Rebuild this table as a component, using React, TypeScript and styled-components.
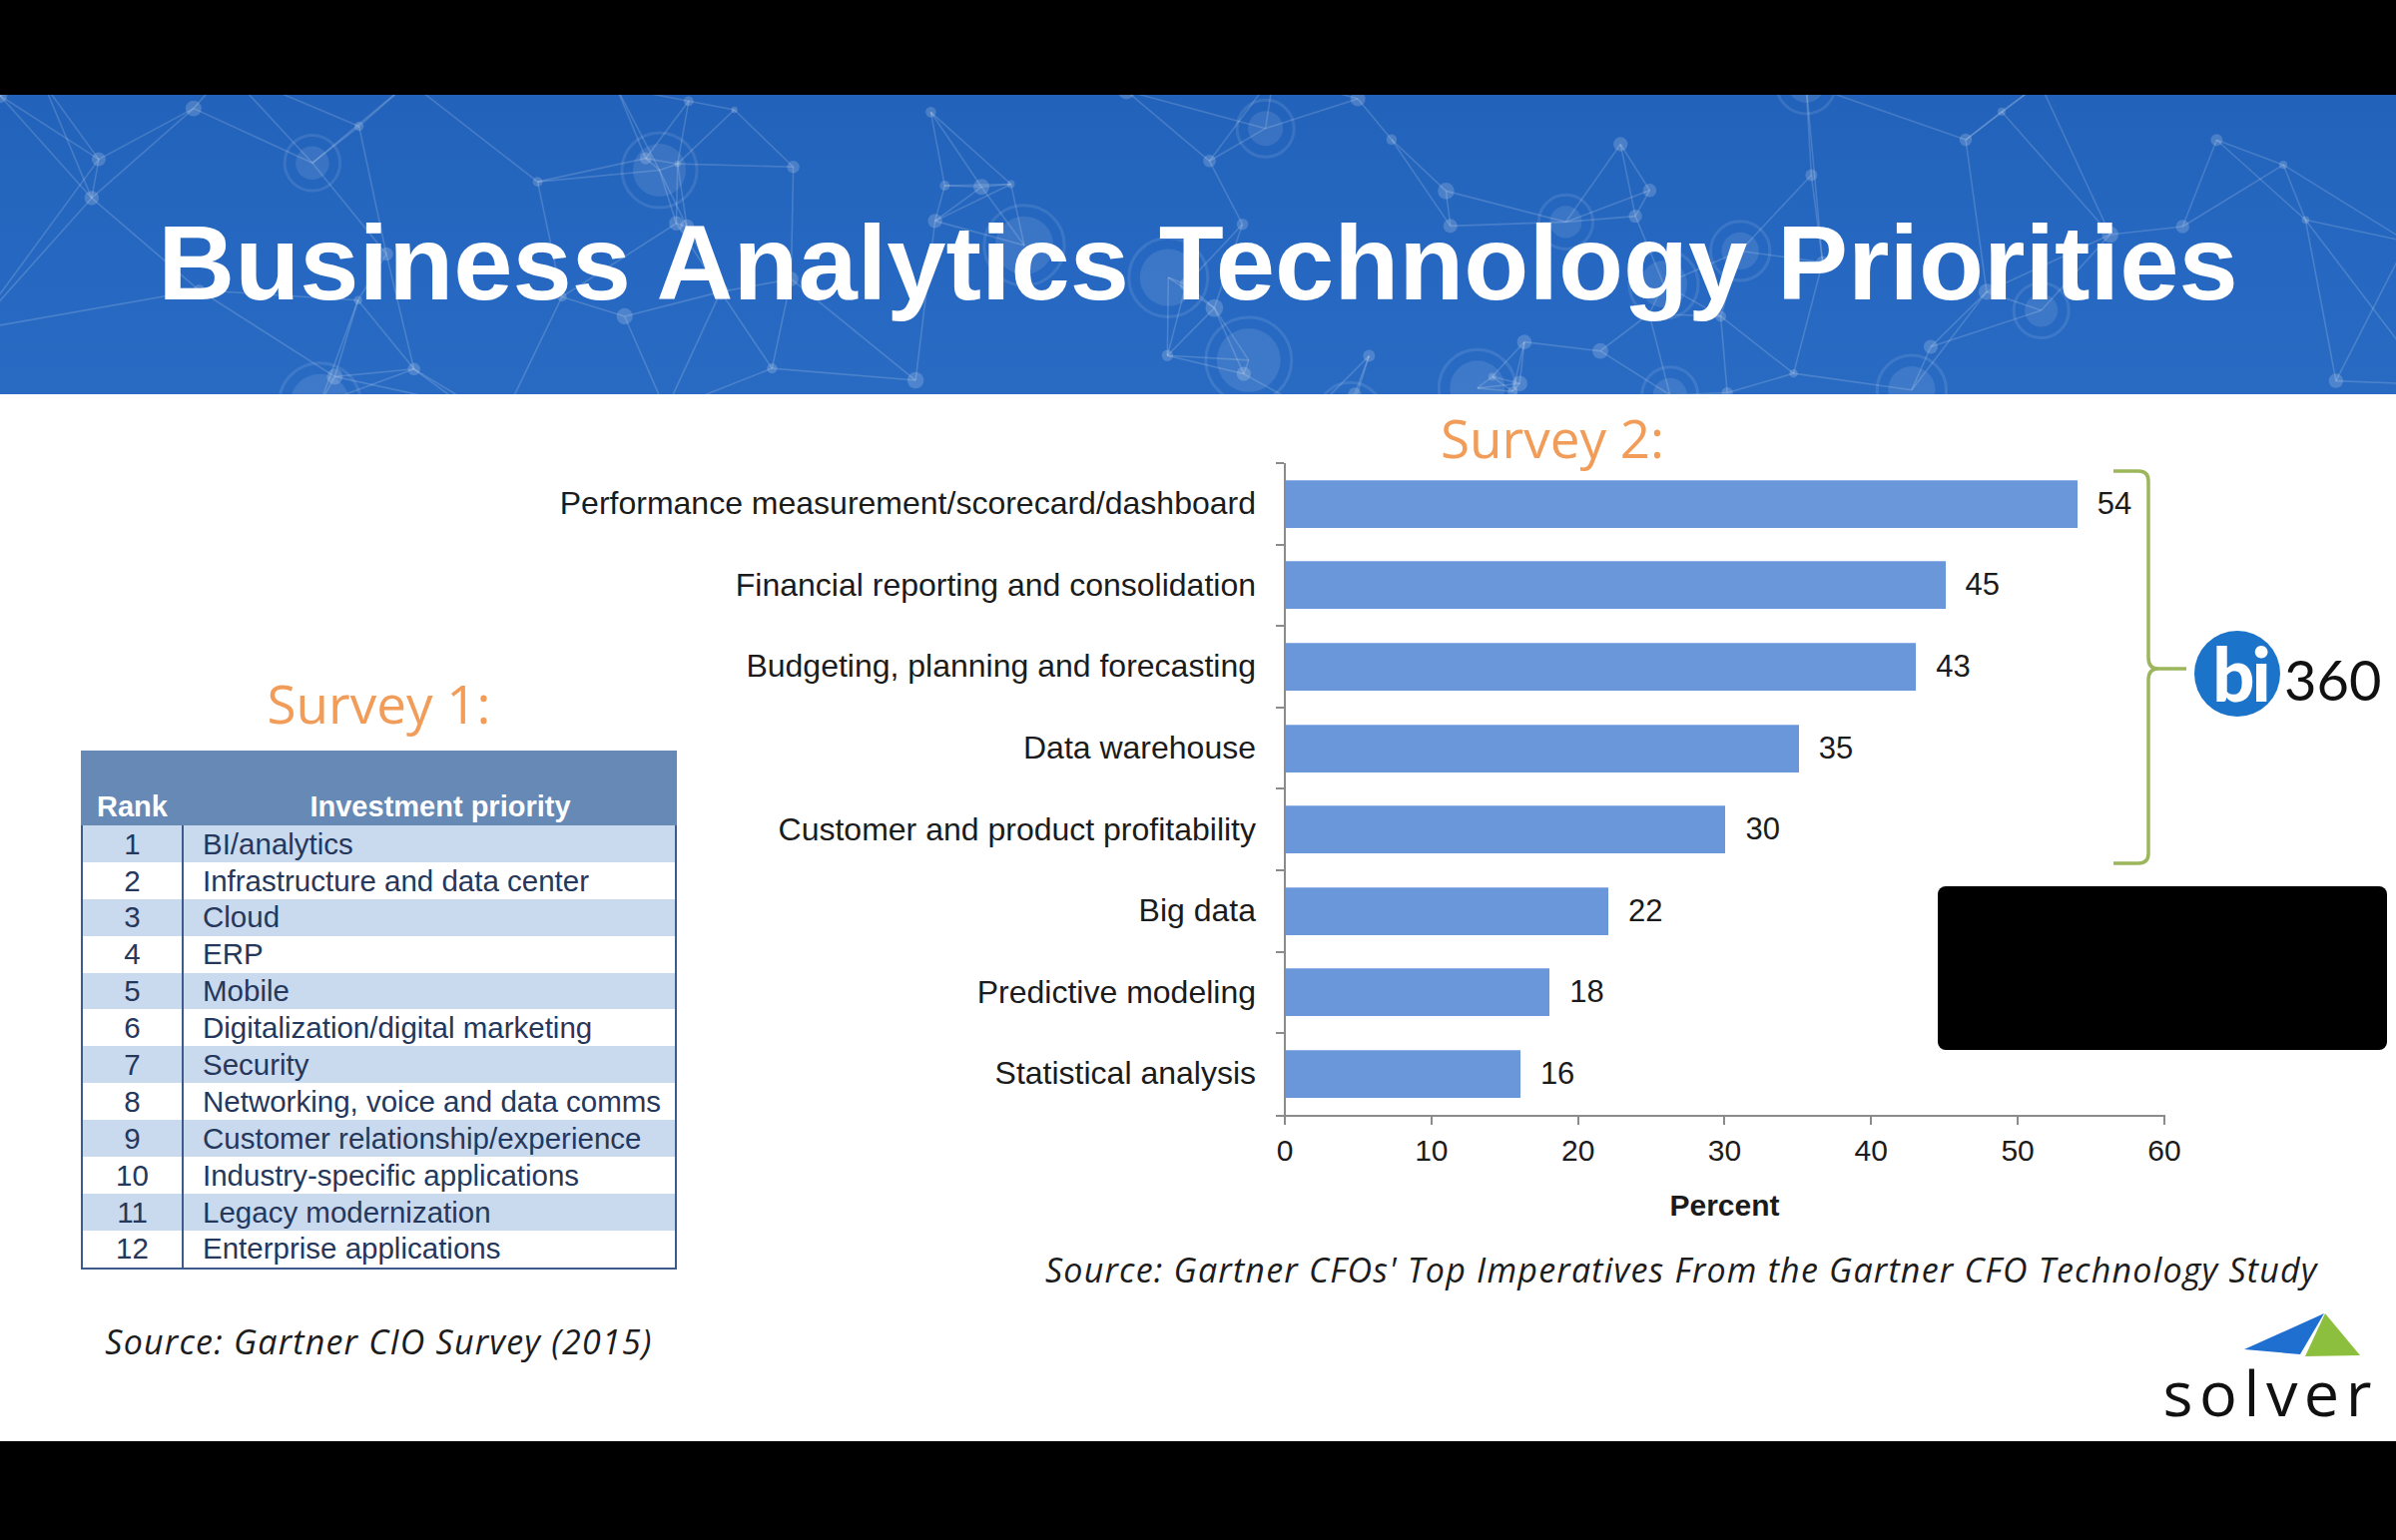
import React, { useMemo } from 'react';
import styled, { createGlobalStyle } from 'styled-components';

const GlobalStyle = createGlobalStyle`
  html, body {
    margin: 0;
    padding: 0;
    background: #000;
  }
  body {
    width: 2400px;
    height: 1543px;
    overflow: hidden;
    font-family: 'Liberation Sans', Arial, sans-serif;
  }
  * {
    box-sizing: border-box;
  }
`;

const Slide = styled.div`
  width: 2400px;
  height: 1543px;
  display: flex;
  flex-direction: column;
  background: #000;
`;

const Letterbox = styled.div<{ $h: number }>`
  height: ${(p) => p.$h}px;
  flex-shrink: 0;
  background: #000;
`;

const Banner = styled.header`
  position: relative;
  height: 300px;
  flex-shrink: 0;
  overflow: hidden;
  display: flex;
  align-items: center;
  justify-content: center;
  padding-top: 37px;
  background: linear-gradient(180deg, #2262ba 0%, #2668c1 55%, #296bc3 100%);
`;

const NetworkLayer = styled.svg`
  position: absolute;
  inset: 0;
  width: 100%;
  height: 100%;
`;

const Title = styled.h1`
  position: relative;
  margin: 0;
  font-family: 'Liberation Sans', Arial, sans-serif;
  font-weight: 700;
  font-size: 106.5px;
  line-height: 105px;
  color: #fff;
  white-space: nowrap;
`;

const Content = styled.main`
  height: 1049px;
  flex-shrink: 0;
  background: #fff;
  display: flex;
`;

const LeftColumn = styled.section`
  width: 597px;
  margin-left: 81px;
  padding-top: 283px;
  display: flex;
  flex-direction: column;
  align-items: center;
  flex-shrink: 0;
`;

const RightColumn = styled.section`
  position: relative;
  flex: 1;
  padding-top: 17px;
  display: flex;
  flex-direction: column;
  align-items: flex-start;
`;

const SurveyTitle = styled.h2<{ $offset?: number }>`
  margin: 0 0 0 ${(p) => p.$offset ?? 0}px;
  font-family: 'Open Sans', 'Noto Sans', sans-serif;
  font-weight: 400;
  font-size: 53px;
  line-height: 53px;
  color: #f19c58;
  white-space: nowrap;
`;

const SourceNote = styled.p<{ $offset?: number; $top: number }>`
  margin: ${(p) => p.$top}px 0 0 ${(p) => p.$offset ?? 0}px;
  font-family: 'Open Sans', 'Noto Sans', sans-serif;
  font-style: italic;
  font-size: 34px;
  line-height: 40px;
  letter-spacing: 1.2px;
  color: #1c1c1c;
  white-space: nowrap;
`;

/* ---------- survey 1 table ---------- */

const TableBox = styled.div`
  width: 597px;
  margin-top: 21px;
  display: flex;
  flex-direction: column;
`;

const TableHead = styled.div`
  height: 75px;
  display: grid;
  grid-template-columns: 103px 1fr;
  align-items: end;
  padding-bottom: 2px;
  background: #6689b5;
  color: #fff;
  font-weight: 700;
  font-size: 29px;
  line-height: 34px;
`;

const HeadCell = styled.div<{ $pad?: number }>`
  text-align: center;
  padding-left: ${(p) => p.$pad ?? 0}px;
  white-space: nowrap;
`;

const TableBody = styled.div`
  border: 2px solid #3d5a8b;
  border-top: none;
`;

const TableRow = styled.div<{ $shade: boolean }>`
  height: 36.9px;
  display: grid;
  grid-template-columns: 101px 1fr;
  background: ${(p) => (p.$shade ? '#c9daef' : '#ffffff')};
  color: #25375b;
  font-size: 29.5px;
  line-height: 1;
`;

const RankCell = styled.div`
  display: flex;
  align-items: center;
  justify-content: center;
  border-right: 2px solid #3d5a8b;
`;

const ItemCell = styled.div`
  display: flex;
  align-items: center;
  padding-left: 19px;
  white-space: nowrap;
`;

/* ---------- survey 2 chart ---------- */

const UNIT = 14.68;
const BAND = 81.6;
const LABEL_COL = 608;
const PLOT_W = 881;

const ChartBody = styled.div`
  display: flex;
  margin-top: -1px;
`;

const CategoryColumn = styled.div`
  width: ${LABEL_COL}px;
  padding-right: 28px;
  display: flex;
  flex-direction: column;
`;

const CategoryLabel = styled.div`
  height: ${BAND}px;
  display: flex;
  align-items: center;
  justify-content: flex-end;
  white-space: nowrap;
  font-size: 32px;
  color: #1b1b1b;
`;

const Plot = styled.div`
  position: relative;
  width: ${PLOT_W + 2}px;
  border-left: 2px solid #8b8b8b;
  border-bottom: 2px solid #8b8b8b;
  display: flex;
  flex-direction: column;
  &::after {
    content: '';
    position: absolute;
    left: -10px;
    bottom: -2px;
    width: 10px;
    height: 2px;
    background: #8b8b8b;
  }
`;

const BarRow = styled.div`
  position: relative;
  height: ${BAND}px;
  display: flex;
  align-items: center;
  &::before {
    content: '';
    position: absolute;
    left: -10px;
    top: -1px;
    width: 8px;
    height: 2px;
    background: #8b8b8b;
  }
`;

const Bar = styled.div`
  height: 48px;
  background: #6a97da;
  border-top: 1px solid #8fb1e6;
`;

const BarValue = styled.span`
  margin-left: 20px;
  font-size: 31px;
  color: #1b1b1b;
`;

const AxisTicks = styled.div`
  margin-left: ${LABEL_COL}px;
  width: ${PLOT_W + 2}px;
  height: 8px;
  background: repeating-linear-gradient(
    to right,
    #8b8b8b 0,
    #8b8b8b 2px,
    transparent 2px,
    transparent ${PLOT_W / 6}px
  );
`;

const TickLabels = styled.div`
  display: flex;
  margin-left: ${LABEL_COL + 1 - PLOT_W / 12}px;
  margin-top: 9px;
`;

const TickLabel = styled.span`
  width: ${PLOT_W / 6}px;
  text-align: center;
  font-size: 30px;
  line-height: 34px;
  color: #1b1b1b;
`;

const AxisTitle = styled.div`
  margin: 21px 0 0 ${LABEL_COL}px;
  width: ${PLOT_W + 2}px;
  text-align: center;
  font-weight: 700;
  font-size: 30px;
  line-height: 34px;
  color: #1b1b1b;
`;

const BraceMark = styled.svg`
  position: absolute;
  left: 1432px;
  top: 72px;
`;

const BiLogo = styled.div`
  position: absolute;
  left: 1520px;
  top: 237px;
  display: flex;
  align-items: center;
`;

const BiCircle = styled.div`
  width: 86px;
  height: 86px;
  border-radius: 50%;
  background: #1b74c9;
  display: flex;
  align-items: center;
  justify-content: center;
  padding-left: 6px;
  color: #fff;
  font-family: 'Lato', 'Open Sans', sans-serif;
  font-weight: 900;
  font-size: 74px;
  line-height: 1;
  letter-spacing: -3px;
`;

const BiText = styled.span`
  margin-left: 4px;
  margin-top: 12px;
  font-family: 'Lato', 'Open Sans', sans-serif;
  font-weight: 400;
  font-size: 56px;
  line-height: 1;
  color: #111;
`;

const Redaction = styled.div`
  position: absolute;
  left: 1263px;
  top: 493px;
  width: 450px;
  height: 164px;
  border-radius: 8px;
  background: #000;
`;

const SolverLogo = styled.div`
  align-self: flex-end;
  margin: 23px 24px 0 0;
  display: flex;
  flex-direction: column;
  align-items: flex-end;
`;

const SolverMark = styled.svg`
  margin-right: 11px;
`;

const SolverWord = styled.span`
  margin-top: 3px;
  margin-right: -6px;
  font-family: 'Open Sans', 'Noto Sans', sans-serif;
  font-weight: 400;
  font-size: 63px;
  line-height: 62px;
  letter-spacing: 6.5px;
  color: #111;
`;

const priorities = [
  'BI/analytics',
  'Infrastructure and data center',
  'Cloud',
  'ERP',
  'Mobile',
  'Digitalization/digital marketing',
  'Security',
  'Networking, voice and data comms',
  'Customer relationship/experience',
  'Industry-specific applications',
  'Legacy modernization',
  'Enterprise applications',
];

const imperatives = [
  { label: 'Performance measurement/scorecard/dashboard', value: 54 },
  { label: 'Financial reporting and consolidation', value: 45 },
  { label: 'Budgeting, planning and forecasting', value: 43 },
  { label: 'Data warehouse', value: 35 },
  { label: 'Customer and product profitability', value: 30 },
  { label: 'Big data', value: 22 },
  { label: 'Predictive modeling', value: 18 },
  { label: 'Statistical analysis', value: 16 },
];

function seeded(seed: number) {
  let a = seed;
  return () => {
    a = (a + 0x6d2b79f5) | 0;
    let t = Math.imul(a ^ (a >>> 15), 1 | a);
    t = (t + Math.imul(t ^ (t >>> 7), 61 | t)) ^ t;
    return ((t ^ (t >>> 14)) >>> 0) / 4294967296;
  };
}

function Network() {
  const { nodes, links } = useMemo(() => {
    const rnd = seeded(42);
    const pts = Array.from({ length: 95 }, () => ({
      x: rnd() * 2500 - 50,
      y: rnd() * 360 - 30,
      r: rnd() < 0.14 ? 16 + rnd() * 16 : 3 + rnd() * 6,
    }));
    const seen = new Set<string>();
    const ls: { a: number; b: number }[] = [];
    pts.forEach((p, i) => {
      const near = pts
        .map((q, j) => ({ j, d: Math.hypot(p.x - q.x, p.y - q.y) }))
        .filter((o) => o.j !== i && o.d < 420)
        .sort((m, n) => m.d - n.d)
        .slice(0, 3);
      near.forEach(({ j }) => {
        const key = i < j ? `${i}-${j}` : `${j}-${i}`;
        if (!seen.has(key)) {
          seen.add(key);
          ls.push({ a: i, b: j });
        }
      });
    });
    return { nodes: pts, links: ls };
  }, []);

  return (
    <NetworkLayer viewBox="0 0 2400 300" preserveAspectRatio="none">
      {links.map((l, i) => (
        <line
          key={i}
          x1={nodes[l.a].x}
          y1={nodes[l.a].y}
          x2={nodes[l.b].x}
          y2={nodes[l.b].y}
          stroke="rgba(255,255,255,0.16)"
          strokeWidth={1.6}
        />
      ))}
      {nodes.map((n, i) => (
        <g key={i}>
          {n.r > 14 && (
            <circle cx={n.x} cy={n.y} r={n.r + 11} fill="none" stroke="rgba(255,255,255,0.1)" strokeWidth={3} />
          )}
          <circle cx={n.x} cy={n.y} r={n.r} fill={n.r > 14 ? 'rgba(255,255,255,0.1)' : 'rgba(255,255,255,0.18)'} />
        </g>
      ))}
    </NetworkLayer>
  );
}

function PriorityTable() {
  return (
    <TableBox>
      <TableHead>
        <HeadCell>Rank</HeadCell>
        <HeadCell $pad={20}>Investment priority</HeadCell>
      </TableHead>
      <TableBody>
        {priorities.map((item, i) => (
          <TableRow key={item} $shade={i % 2 === 0}>
            <RankCell>{i + 1}</RankCell>
            <ItemCell>{item}</ItemCell>
          </TableRow>
        ))}
      </TableBody>
    </TableBox>
  );
}

function ImperativesChart() {
  return (
    <>
      <ChartBody>
        <CategoryColumn>
          {imperatives.map((d) => (
            <CategoryLabel key={d.label}>{d.label}</CategoryLabel>
          ))}
        </CategoryColumn>
        <Plot>
          {imperatives.map((d) => (
            <BarRow key={d.label}>
              <Bar style={{ width: d.value * UNIT }} />
              <BarValue>{d.value}</BarValue>
            </BarRow>
          ))}
        </Plot>
      </ChartBody>
      <AxisTicks />
      <TickLabels>
        {[0, 10, 20, 30, 40, 50, 60].map((t) => (
          <TickLabel key={t}>{t}</TickLabel>
        ))}
      </TickLabels>
      <AxisTitle>Percent</AxisTitle>
    </>
  );
}

export default function App() {
  return (
    <>
      <GlobalStyle />
      <Slide>
        <Letterbox $h={95} />
        <Banner>
          <Network />
          <Title>Business Analytics Technology Priorities</Title>
        </Banner>
        <Content>
          <LeftColumn>
            <SurveyTitle>Survey 1:</SurveyTitle>
            <PriorityTable />
            <SourceNote $top={52}>Source: Gartner CIO Survey (2015)</SourceNote>
          </LeftColumn>
          <RightColumn>
            <SurveyTitle $offset={765}>Survey 2:</SurveyTitle>
            <ImperativesChart />
            <SourceNote $top={27} $offset={369}>
              Source: Gartner CFOs' Top Imperatives From the Gartner CFO Technology Study
            </SourceNote>
            <SolverLogo>
              <SolverMark width="118" height="46" viewBox="0 0 118 46">
                <polygon points="1,37 81,1 57,42" fill="#1f6fd1" />
                <polygon points="82,1 62,44 117,43" fill="#8dbf3f" />
              </SolverMark>
              <SolverWord>solver</SolverWord>
            </SolverLogo>

            <BraceMark width="86" height="406" viewBox="0 0 86 406">
              <path
                d="M7 5 L32 5 Q42 5 42 15 L42 192 Q42 203 52 203 L80 203 M52 203 Q42 203 42 214 L42 388 Q42 398 32 398 L7 398"
                fill="none"
                stroke="#9bb65b"
                strokeWidth="3.5"
              />
            </BraceMark>
            <BiLogo>
              <BiCircle>bi</BiCircle>
              <BiText>360</BiText>
            </BiLogo>
            <Redaction />
          </RightColumn>
        </Content>
        <Letterbox $h={99} />
      </Slide>
    </>
  );
}
